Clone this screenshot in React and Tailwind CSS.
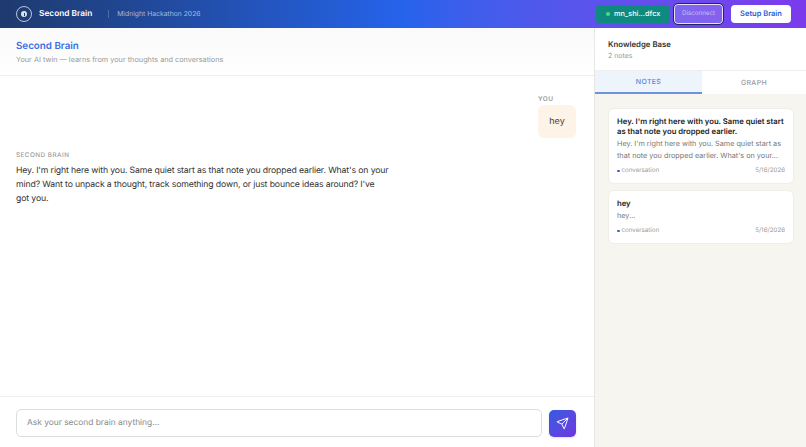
import { Send } from "lucide-react";

function NoteCard({ title, body, date }) {
    return (
        <div className="bg-white rounded-[6px] border border-[#efeee9] pl-[8px] pr-[8px] pt-[8px] pb-[7px]">
            <div className="text-[7.7px] leading-[10px] font-semibold text-[#222]">{title}</div>
            <div className="mt-[1px] text-[7.25px] leading-[12px] text-[#777]">{body}</div>
            <div className="mt-[4px] flex justify-between items-center text-[6.2px] leading-[10px] text-[#999]">
                <span className="flex items-center gap-[2px]">
                    <span className="w-[2.5px] h-[2.5px] rounded-full bg-[#3b5bdb]" />
                    conversation
                </span>
                <span>{date}</span>
            </div>
        </div>
    );
}

export default function App() {
    return (
        <div className="h-[447px] w-[806px] flex flex-col overflow-hidden bg-white font-['Inter',sans-serif] [text-rendering:geometricPrecision]">
            {/* Top bar */}
            <header className="h-[28px] shrink-0 flex items-center justify-between pl-[16px] pr-[15px] bg-gradient-to-r from-[#1e3a6e] via-[#2563eb] to-[#7c3aed]">
                <div className="flex items-center">
                    <div className="w-[16px] h-[16px] rounded-full border-[1.5px] border-white/70 flex items-center justify-center">
                        <span className="w-[6px] h-[6px] rounded-full bg-white/85 flex items-center justify-center">
                            <span className="w-[1px] h-[3px] bg-[#1e3a6e]" />
                        </span>
                    </div>
                    <span className="ml-[7px] text-[8.3px] font-semibold text-white">Second Brain</span>
                    <span className="ml-[16px] w-px h-[8px] bg-white/20" />
                    <span className="ml-[8px] text-[6.8px] text-white/60">Midnight Hackathon 2026</span>
                </div>
                <div className="flex items-center">
                    <div className="h-[18px] w-[74px] rounded-[4px] bg-[#0f8a7e] flex items-center pl-[10px] gap-[4px]">
                        <span className="w-[4px] h-[4px] rounded-full bg-[#4ade80]" />
                        <span className="text-[7.3px] font-medium text-white">mn_shi...dfcx</span>
                    </div>
                    <div className="ml-[4px] h-[20px] w-[49px] rounded-[4px] border border-white/80 outline outline-1 outline-[#1e2a5e] bg-white/15 flex items-center justify-center text-[6.2px] text-white/60">
                        Disconnect
                    </div>
                    <div className="ml-[8px] h-[18px] w-[60px] rounded-[4px] bg-white flex items-center justify-center text-[7.5px] font-semibold text-[#2f5bd8]">
                        Setup Brain
                    </div>
                </div>
            </header>

            <div className="flex-1 flex min-h-0">
                {/* Chat column */}
                <main className="w-[595px] shrink-0 flex flex-col border-r border-[#e8e6e1]">
                    <div className="h-[48px] shrink-0 px-[16px] pt-[12px] border-b border-[#eeeeee] bg-gradient-to-b from-[#fafafa] to-white">
                        <div className="text-[9.8px] leading-[14px] font-semibold text-[#3b6fe0]">Second Brain</div>
                        <div className="mt-[1px] text-[7.3px] leading-[10px] text-[#999]">Your AI twin — learns from your thoughts and conversations</div>
                    </div>

                    <div className="flex-1 pl-[16px] pr-[18px] pt-[19px]">
                        <div className="flex flex-col items-end">
                            <div className="w-[38px] text-[6.5px] leading-[8px] font-semibold tracking-[0.06em] text-[#999]">YOU</div>
                            <div className="mt-[2px] w-[38px] h-[33px] pt-[1px] rounded-[6px] bg-[#fdf3e7] flex items-center justify-center text-[9px] text-[#444]">
                                hey
                            </div>
                        </div>
                        <div className="mt-[13px] text-[6.3px] leading-[8px] font-medium tracking-[0.08em] text-[#999]">SECOND BRAIN</div>
                        <p className="mt-[5px] w-[373px] text-[8.7px] leading-[14px] tracking-[-0.015em] text-[#333]">
                            Hey. I'm right here with you. Same quiet start as that note you dropped earlier. What's on your mind? Want to unpack a thought, track something down, or just bounce ideas around? I've got you.
                        </p>
                    </div>

                    <div className="h-[51px] shrink-0 border-t border-[#eeeeee] flex items-center pt-[2px] pl-[16px] pr-[18px] gap-[7px]">
                        <div className="flex-1 h-[28px] rounded-[5px] border border-[#ddd] flex items-center px-[10px] text-[8.4px] text-[#888]">
                            Ask your second brain anything...
                        </div>
                        <div className="w-[27px] h-[27px] rounded-[5px] bg-gradient-to-br from-[#2f5be0] to-[#6d35e0] flex items-center justify-center shadow-sm">
                            <Send size={13} strokeWidth={1.8} className="text-white" />
                        </div>
                    </div>
                </main>

                {/* Knowledge base */}
                <aside className="flex-1 flex flex-col bg-[#f6f5f0]">
                    <div className="bg-white h-[43px] shrink-0 px-[13px] pt-[11px] border-b border-[#eeeeee]">
                        <div className="text-[7.8px] leading-[11px] font-semibold text-[#333]">Knowledge Base</div>
                        <div className="mt-[1px] text-[7px] leading-[10px] text-[#999]">2 notes</div>
                    </div>
                    <div className="h-[23px] shrink-0 flex bg-white">
                        <div className="w-[107px] pt-[1px] bg-[#eef4fc] border-b-2 border-[#6b93e0] flex items-center justify-center text-[7px] font-medium tracking-[0.05em] text-[#5b82d8]">NOTES</div>
                        <div className="flex-1 pt-[1px] flex items-center justify-center text-[7px] font-medium tracking-[0.05em] text-[#999]">GRAPH</div>
                    </div>
                    <div className="flex flex-col gap-[6px] pl-[13px] pr-[12px] pt-[14px]">
                        <NoteCard
                            title="Hey. I'm right here with you. Same quiet start as that note you dropped earlier."
                            body="Hey. I'm right here with you. Same quiet start as that note you dropped earlier. What's on your..."
                            date="5/16/2026"
                        />
                        <NoteCard title="hey" body="hey..." date="5/16/2026" />
                    </div>
                </aside>
            </div>
        </div>
    );
}
